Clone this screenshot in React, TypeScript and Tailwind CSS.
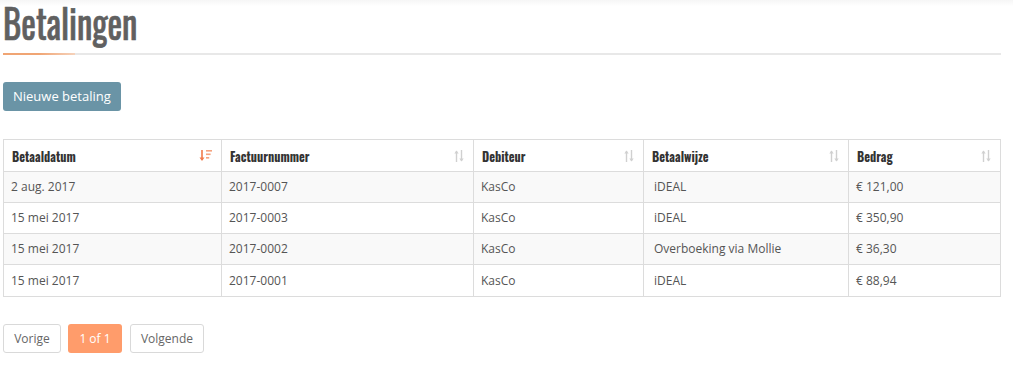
import React from "react";

const cond = { fontFamily: "Oswald, 'Liberation Sans Narrow', 'DejaVu Sans Condensed', sans-serif" };

function SortIcon({ active }: { active?: boolean }) {
  if (active) {
    return (
      <svg width="14" height="14" viewBox="0 0 14 14" className="shrink-0">
        <path d="M3 1v10" stroke="#f27a4a" strokeWidth="1.6" />
        <path d="M0.5 8.5L3 12L5.5 8.5Z" fill="#f27a4a" />
        <rect x="7" y="1" width="6" height="1.6" fill="#f5a27e" />
        <rect x="7" y="4.5" width="4.6" height="1.6" fill="#f5a27e" />
        <rect x="7" y="8" width="3.2" height="1.6" fill="#f5a27e" />
      </svg>
    );
  }
  return (
    <svg width="12" height="14" viewBox="0 0 12 14" className="shrink-0">
      <path d="M3.5 2v11" stroke="#d0d0d0" strokeWidth="1.4" />
      <path d="M1.3 4.5L3.5 1.5L5.7 4.5Z" fill="#d0d0d0" />
      <path d="M8.5 1v11" stroke="#d0d0d0" strokeWidth="1.4" />
      <path d="M6.3 9.5L8.5 12.5L10.7 9.5Z" fill="#d0d0d0" />
    </svg>
  );
}

const cols = [
  { label: "Betaaldatum", w: "w-[218px]", active: true },
  { label: "Factuurnummer", w: "w-[252px]" },
  { label: "Debiteur", w: "w-[170px]" },
  { label: "Betaalwijze", w: "w-[205px]" },
  { label: "Bedrag", w: "" },
];

const rows = [
  ["2 aug. 2017", "2017-0007", "KasCo", "iDEAL", "€ 121,00"],
  ["15 mei 2017", "2017-0003", "KasCo", "iDEAL", "€ 350,90"],
  ["15 mei 2017", "2017-0002", "KasCo", "Overboeking via Mollie", "€ 36,30"],
  ["15 mei 2017", "2017-0001", "KasCo", "iDEAL", "€ 88,94"],
];

export default function App() {
  return (
    <div className="w-[1013px] h-[370px] bg-white overflow-hidden relative" style={{ fontFamily: "'Open Sans', sans-serif" }}>
      <div className="absolute top-0 left-0 right-0 h-[6px] bg-gradient-to-b from-[#f6f6f6] to-white" />
      <div className="pl-[3px] pr-[12px] relative">
        <h1 className="text-[41px] leading-[44px] text-[#606060] font-normal [-webkit-text-stroke:0.7px_#606060]" style={cond}>
          <span className="inline-block origin-left scale-x-[0.85] whitespace-nowrap">Betalingen</span>
        </h1>
        <div className="mt-[9px] h-[2px] bg-[#e8e8e8] relative">
          <div className="absolute left-0 top-0 h-[2px] w-[72px] bg-gradient-to-r from-[#f0a574] via-[#f0a574] to-[#f5d2bb]" />
        </div>
        <div className="mt-[27px]">
          <button className="h-[29px] px-[10px] rounded-[3px] bg-[#6a94a6] text-white text-[13px] leading-[29px]">
            Nieuwe betaling
          </button>
        </div>
        <div className="mt-[28px] border border-[#dcdcdc] w-[998px]">
          <div className="flex h-[32px] border-b border-[#dcdcdc] bg-white">
            {cols.map((c, i) => (
              <div
                key={c.label}
                className={`${c.w} ${i === cols.length - 1 ? "flex-1" : "border-r border-[#dcdcdc]"} flex items-center justify-between pl-[8px] pr-[8px]`}
              >
                <span className="text-[14px] font-bold text-[#333]" style={cond}>
                  <span className="inline-block origin-left scale-x-[0.88]">{c.label}</span>
                </span>
                <SortIcon active={c.active} />
              </div>
            ))}
          </div>
          {rows.map((r, ri) => (
            <div
              key={ri}
              className={`flex h-[31px] ${ri < rows.length - 1 ? "border-b border-[#dcdcdc]" : ""} ${ri % 2 === 0 ? "bg-[#f9f9f9]" : "bg-white"}`}
            >
              {r.map((cell, ci) => (
                <div
                  key={ci}
                  className={`${cols[ci].w} ${ci === cols.length - 1 ? "flex-1" : "border-r border-[#dcdcdc]"} flex items-center ${ci === 3 ? "pl-[10px]" : "pl-[7px]"} text-[12px] text-[#555]`}
                >
                  {cell}
                </div>
              ))}
            </div>
          ))}
        </div>
        <div className="mt-[27px] flex gap-[7px] text-[12px]">
          <div className="h-[29px] w-[58px] border border-[#d9d9d9] rounded-[3px] flex items-center justify-center text-[#666]">Vorige</div>
          <div className="h-[29px] w-[54px] rounded-[3px] bg-[#ff9c6b] flex items-center justify-center text-white">1 of 1</div>
          <div className="h-[29px] w-[74px] border border-[#d9d9d9] rounded-[3px] flex items-center justify-center text-[#666] ml-[1px]">Volgende</div>
        </div>
      </div>
    </div>
  );
}
